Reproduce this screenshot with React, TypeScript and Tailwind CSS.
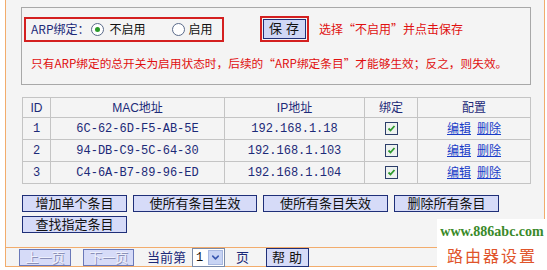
import { ChevronDown } from 'lucide-react';

const rows = [
  { id: 1, mac: '6C-62-6D-F5-AB-5E', ip: '192.168.1.18' },
  { id: 2, mac: '94-DB-C9-5C-64-30', ip: '192.168.1.103' },
  { id: 3, mac: 'C4-6A-B7-89-96-ED', ip: '192.168.1.104' },
];

const sans = "font-['Liberation_Sans','Noto_Sans_CJK_SC',sans-serif]";
const cjk = "font-['Noto_Sans_CJK_SC',sans-serif]";
const mono = "font-['Liberation_Mono','Noto_Sans_CJK_SC',monospace]";

function Radio({ checked }: { checked?: boolean }) {
  return (
    <span className="shrink-0 w-[13px] h-[13px] rounded-full border border-[#5a6a8a] bg-white flex items-center justify-center">
      {checked && <span className="w-[5px] h-[5px] rounded-full bg-[#2a9a2a]" />}
    </span>
  );
}

function Check() {
  return (
    <span className="w-[13px] h-[13px] border border-[#2c3e6a] bg-[#eef2f0] flex items-center justify-center">
      <svg width="9" height="9" viewBox="0 0 9 9">
        <path d="M1.5 4.5 L3.5 6.5 L7.5 2" stroke="#2e9a2e" strokeWidth="1.8" fill="none" />
      </svg>
    </span>
  );
}

function Btn({ children, w, className = '' }: { children: React.ReactNode; w: string; className?: string }) {
  return (
    <button
      className={`${w} h-[17px] border border-[#1f2f78] bg-[#d6dbf8] text-[13px] leading-[15px] text-[#111] whitespace-nowrap ${className}`}
    >
      {children}
    </button>
  );
}

export default function App() {
  return (
    <div className={`relative w-[547px] h-[270px] bg-white overflow-hidden ${sans}`}>
      <div className="ml-[5px] w-[540px] h-[267px] border-l border-r border-b border-[#f2ac6c] bg-[#f4f4f4] flex flex-col">
        <div className="pl-[15px] pt-[7px]">
          {/* fieldset */}
          <div className="w-[510px] h-[78px] border border-[#a8a8a8] pt-[8px] pl-[2px]">
            <div className="flex items-center whitespace-nowrap">
              <div className={`shrink-0 w-[200px] h-[25px] border-2 border-[#d42020] flex items-center pl-[5px] text-[12px] ${cjk}`}>
                <span className="text-[#1c2a78]">ARP绑定：</span>
                <span className="ml-[1px]"><Radio checked /></span>
                <span className="ml-[6px] text-[#111]">不启用</span>
                <span className="ml-[26px]"><Radio /></span>
                <span className="ml-[4px] text-[#111]">启用</span>
              </div>
              <div className="shrink-0 ml-[36px] w-[49px] h-[26px] border-2 border-[#d42020] flex items-center justify-center">
                <button className="w-[43px] h-[20px] border border-[#1f2f78] bg-[#d0d7f6] text-[13px] leading-[18px] text-[#111] tracking-[4px] pl-[3px]">
                  保存
                </button>
              </div>
              <span className={`ml-[10px] text-[12px] text-[#e01010] ${cjk}`}>选择“不启用”并点击保存</span>
            </div>
            <div className={`mt-[12px] ml-[7px] text-[11.7px] text-[#e01010] whitespace-nowrap ${cjk}`}>
              只有ARP绑定的总开关为启用状态时，后续的“ARP绑定条目”才能够生效；反之，则失效。
            </div>
          </div>

          {/* table */}
          <table className="mt-[12px] ml-[1px] w-[509px] border-collapse border border-[#a8a8a8] text-[12px] text-[#1c2a78]">
            <thead>
              <tr className="h-[20px]">
                <th className="w-[28px] border border-[#c4c4c4] font-normal">ID</th>
                <th className="w-[174px] border border-[#c4c4c4] font-normal">MAC地址</th>
                <th className="w-[140px] border border-[#c4c4c4] font-normal">IP地址</th>
                <th className="w-[53px] border border-[#c4c4c4] font-normal">绑定</th>
                <th className="border border-[#c4c4c4] font-normal">配置</th>
              </tr>
            </thead>
            <tbody>
              {rows.map((r) => (
                <tr key={r.id} className="h-[22px]">
                  <td className={`border border-[#c4c4c4] text-center ${mono}`}>{r.id}</td>
                  <td className={`border border-[#c4c4c4] text-center ${mono}`}>{r.mac}</td>
                  <td className={`border border-[#c4c4c4] text-center ${mono}`}>{r.ip}</td>
                  <td className="border border-[#c4c4c4]">
                    <div className="flex justify-center"><Check /></div>
                  </td>
                  <td className="border border-[#c4c4c4] text-center">
                    <a className="underline text-[#1a3cc8] cursor-pointer">编辑</a>
                    <a className="ml-[6px] underline text-[#1a3cc8] cursor-pointer">删除</a>
                  </td>
                </tr>
              ))}
            </tbody>
          </table>

          {/* action buttons */}
          <div className="mt-[11px] ml-[1px] flex gap-[6px]">
            <Btn w="w-[105px]">增加单个条目</Btn>
            <Btn w="w-[124px]">使所有条目生效</Btn>
            <Btn w="w-[125px]">使所有条目失效</Btn>
            <Btn w="w-[105px]">删除所有条目</Btn>
          </div>
          <div className="ml-[1px]">
            <Btn w="w-[105px]">查找指定条目</Btn>
          </div>
        </div>

        {/* pager */}
        <div className="mt-[11px] border-t border-[#f2ac6c] flex-1 flex items-center pl-[13px] text-[12px] whitespace-nowrap">
          <button className="w-[52px] h-[17px] border border-[#6a78b8] bg-[#d6dbf8] text-[13px] leading-[15px] text-[#eef0fc] [text-shadow:1px_1px_0_#8a90b8]">
            上一页
          </button>
          <button className="ml-[12px] w-[51px] h-[17px] border border-[#6a78b8] bg-[#d6dbf8] text-[13px] leading-[15px] text-[#eef0fc] [text-shadow:1px_1px_0_#8a90b8]">
            下一页
          </button>
          <span className="ml-[13px] text-[13px] text-[#1c2a78]">当前第</span>
          <div className="ml-[6px] w-[33px] h-[19px] border border-[#7a8aa8] bg-white flex items-center">
            <span className={`pl-[3px] flex-1 text-[12px] text-[#111] ${mono}`}>1</span>
            <span className="w-[15px] h-[15px] mr-[1px] bg-[#c8d4f4] border border-[#a8b8e0] flex items-center justify-center">
              <ChevronDown size={11} strokeWidth={3.5} className="text-[#3a58b0]" />
            </span>
          </div>
          <span className="ml-[11px] text-[13px] text-[#1c2a78]">页</span>
          <button className="ml-[17px] w-[43px] h-[19px] border border-[#1f2f78] bg-[#d6dbf8] text-[13px] leading-[17px] text-[#111] tracking-[4px] pl-[3px]">
            帮助
          </button>
        </div>
      </div>

      {/* watermark */}
      <div className="absolute left-[437px] top-[219px] w-[110px] h-[51px] bg-white flex flex-col items-center">
        <span className="mt-[5px] text-[14px] leading-[16px] font-bold text-[#3a8a2a] font-['Liberation_Serif',serif]">
          www.886abc.com
        </span>
        <span className="mt-[6px] text-[16px] leading-[18px] tracking-[2px] text-[#e0542a] font-['Noto_Sans_CJK_SC',sans-serif]">
          路由器设置
        </span>
      </div>
    </div>
  );
}
